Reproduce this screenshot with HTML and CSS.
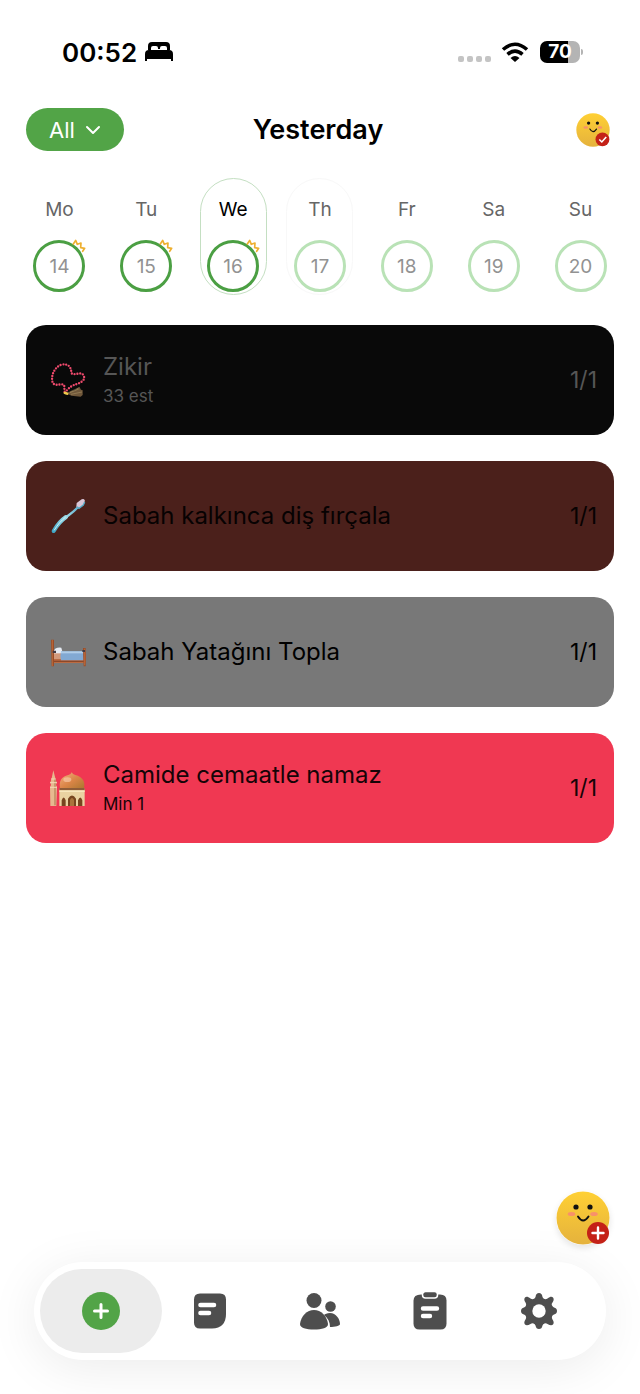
FILE: index.html
```html
<!DOCTYPE html>
<html lang="en">
<head>
<meta charset="UTF-8" />
<meta name="viewport" content="width=device-width, initial-scale=1" />
<title>Habits</title>
<link rel="stylesheet" href="styles.css">
</head>
<body>
  <!-- shared shapes -->
  <svg class="defs" width="0" height="0" aria-hidden="true">
    <defs>
      <linearGradient id="face" x1="0" y1="0" x2="0" y2="1">
        <stop offset="0" stop-color="#ffd034" />
        <stop offset="1" stop-color="#e5b23d" />
      </linearGradient>
      <linearGradient id="dome" x1="0" y1="0" x2="1" y2="1">
        <stop offset="0" stop-color="#f4b183" />
        <stop offset="0.5" stop-color="#dc8648" />
        <stop offset="1" stop-color="#a9752f" />
      </linearGradient>
      <linearGradient id="brush" gradientUnits="userSpaceOnUse" x1="185" y1="70" x2="97" y2="158">
        <stop offset="0" stop-color="#4a9fc4" />
        <stop offset="0.5" stop-color="#9fdcea" />
        <stop offset="1" stop-color="#39a3c4" />
      </linearGradient>
    </defs>
    <symbol id="smiley" viewBox="0 0 54 54">
      <circle cx="27" cy="27" r="26.500" fill="url(#face)" />
      <circle cx="20" cy="16" r="2.600" fill="#111" />
      <circle cx="34" cy="16" r="2.600" fill="#111" />
      <ellipse cx="15.500" cy="23" rx="3.800" ry="2" fill="#f8916a" />
      <ellipse cx="38" cy="23" rx="3.800" ry="2" fill="#f8916a" />
      <path d="M22 25.500q5 8 10.500 0" fill="none" stroke="#111" stroke-width="1.900" stroke-linecap="round" />
      <circle cx="42" cy="42" r="11" fill="#c42117" />
    </symbol>
    <symbol id="crown" viewBox="188 208 42 42">
      <path d="M192 223l7-11 5 12 11-4-1 14 12 2-6 9" fill="none" stroke="#eeb030" stroke-width="5" stroke-linecap="round" stroke-linejoin="round" />
    </symbol>
  </svg>

  <div class="status">
    <span class="time">00:52</span>
    <svg class="sleep" viewBox="0 0 28 20" aria-hidden="true">
      <path d="M3 8V4q0-4 4-4h14q4 0 4 4v4h-3V6q0-2-2-2h-3q-2 0-2 2v1h-2V6q0-2-2-2H8Q6 4 6 6v2z" />
      <path d="M0 19v-7q0-4 4-4h20q4 0 4 4v7h-2v-2H2v2z" />
    </svg>
    <span class="signal"><i></i><i></i><i></i><i></i></span>
    <svg class="wifi" viewBox="0 0 28 20" aria-hidden="true">
      <g fill="none" stroke="#000" stroke-width="3.600">
        <path d="M2 7.500q12-10.500 24 0" />
        <path d="M6.500 12.300q7.500-6.500 15 0" />
      </g>
      <path d="M9.500 16q4.500-3.800 9 0L14 20z" />
    </svg>
    <span class="battery">70</span>
  </div>

  <header class="header">
    <button class="filter">All
      <svg width="16" height="10" viewBox="0 0 16 10" aria-hidden="true"><path d="M2 2l6 6 6-6" fill="none" stroke="#fff" stroke-width="2" stroke-linecap="round" stroke-linejoin="round" /></svg>
    </button>
    <h1>Yesterday</h1>
    <button class="mood" aria-label="Mood saved">
      <svg viewBox="0 0 54 54"><use href="#smiley" /><path d="M37 42l4 4 7-8" fill="none" stroke="#fff" stroke-width="2.500" /></svg>
    </button>
  </header>

  <div class="week">
    <button class="day done"><span class="name">Mo</span><span class="ring">14<svg class="crown"><use href="#crown" /></svg></span></button>
    <button class="day done"><span class="name">Tu</span><span class="ring">15<svg class="crown"><use href="#crown" /></svg></span></button>
    <button class="day done selected"><span class="name">We</span><span class="ring">16<svg class="crown"><use href="#crown" /></svg></span></button>
    <button class="day today"><span class="name">Th</span><span class="ring">17</span></button>
    <button class="day"><span class="name">Fr</span><span class="ring">18</span></button>
    <button class="day"><span class="name">Sa</span><span class="ring">19</span></button>
    <button class="day"><span class="name">Su</span><span class="ring">20</span></button>
  </div>

  <main class="habits">
    <article class="habit black">
      <svg class="emoji" viewBox="90 127 108 108" aria-hidden="true">
        <path d="M138 219l26-7 14-11 5 9 5 2v14l-6 5-28-3z" fill="#6f573a" />
        <path d="M150 219l26-11M153 224l33-7M151 216l24-11" stroke="#b29a6b" stroke-width="1.500" />
        <path d="M134 216C131 208 137 200 129 194C117 193 100 201 97 185C93 164 105 142 124 135C145 130 154 143 154 160C162 170 181 154 190 166C201 184 174 192 162 196C150 201 141 210 137 217" fill="none" stroke="#ee4a6c" stroke-width="7" stroke-linecap="round" stroke-dasharray="0 8.500" />
        <ellipse cx="138" cy="221" rx="8" ry="4" fill="#f0ca4b" transform="rotate(20 138 221)" />
      </svg>
      <div class="info"><h2>Zikir</h2><p>33 est</p></div>
      <span class="count">1/1</span>
    </article>
    <article class="habit brown">
      <svg class="emoji" viewBox="90 54 108 108" aria-hidden="true">
        <path d="M100 155C112 135 125 120 143 108C157 98 166 92 180 74" fill="none" stroke="url(#brush)" stroke-width="7" stroke-linecap="round" />
        <path d="M101 153C112 134 123 121 138 111" fill="none" stroke="url(#brush)" stroke-width="12" stroke-linecap="round" />
        <path d="M103 150C113 134 123 122 136 112" fill="none" stroke="#d3f1f5" stroke-width="3" stroke-linecap="round" />
        <path d="M170 69l15-11q7-3 9 3 1 11-9 19l-9 4-7-4z" fill="#d9c6d8" />
        <path d="M171 80l6 5 13-10 4-9" fill="none" stroke="#55a9c6" stroke-width="4" />
      </svg>
      <div class="info"><h2>Sabah kalkınca diş fırçala</h2></div>
      <span class="count">1/1</span>
    </article>
    <article class="habit gray">
      <svg class="emoji" viewBox="90 44 108 108" aria-hidden="true">
        <path d="M96 100h102v31H96z" fill="#bb6b42" />
        <path d="M101 124h90v4h-90z" fill="#8c4829" />
        <path d="M100 98q4-15 24-13l4 15v6h-28z" fill="#e6ebf3" />
        <path d="M101 102h26v17h-26z" fill="#d2997b" />
        <path d="M123 96h68v27h-68q-3-15 0-27z" fill="#82a9d3" />
        <path d="M123 96h68v6h-68z" fill="#b0cde9" />
        <path d="M93 61h9v80h-7zM189 86h8v55h-6z" fill="#9b4c27" />
        <path d="M97 62v78M194 88v50" stroke="#c97845" stroke-width="2" />
        <path d="M98 94h10v7H98zM187 92h8v6h-8z" fill="#433a42" />
      </svg>
      <div class="info"><h2>Sabah Yatağını Topla</h2></div>
      <span class="count">1/1</span>
    </article>
    <article class="habit red">
      <svg class="emoji" viewBox="90 90 108 108" aria-hidden="true">
        <path d="M100 91l6 24 4 13-2 7 3 6-2 57H91l-1-57 3-6-2-7 4-13z" fill="#e7b98f" />
        <path d="M105 116v80" stroke="#b9875b" stroke-width="4" />
        <path d="M90 128h21M90 142h21M93 117h14" stroke="#f6d8b6" stroke-width="3" />
        <path d="M121 147C115 124 125 109 145 105Q153 103 155 97Q158 103 166 105C188 110 198 127 191 147z" fill="url(#dome)" />
        <ellipse cx="142" cy="119" rx="12" ry="7" fill="#fbd1b2" opacity="0.600" />
        <path d="M118 145h76v53h-76z" fill="#ead2a1" />
        <path d="M118 144h76v7h-76z" fill="#8f5d38" />
        <path d="M118 151h76v5h-76z" fill="#f8e7bd" />
        <path d="M125 198v-17q6-17 12 0v17zM144 198v-22q12-19 24 0v22zM174 198v-17q7-17 13 0v17z" fill="#77451f" />
        <path d="M150 198v-19q6-10 12 0v19z" fill="#aa743c" />
      </svg>
      <div class="info"><h2>Camide cemaatle namaz</h2><p>Min 1</p></div>
      <span class="count">1/1</span>
    </article>
  </main>

  <button class="fab" aria-label="Add mood">
    <svg viewBox="0 0 54 54"><use href="#smiley" /><path d="M42 36.500v11M36.500 42h11" stroke="#fff" stroke-width="2.400" stroke-linecap="round" /></svg>
  </button>

  <nav class="tabs">
    <a class="tab active" href="#today" aria-label="Today">
      <svg viewBox="0 0 40 40"><circle cx="20" cy="20" r="19" fill="#52a447" /><path d="M20 13.500v13M13.500 20h13" stroke="#fff" stroke-width="3" stroke-linecap="round" /></svg>
    </a>
    <a class="tab" href="#notes" aria-label="Notes">
      <svg viewBox="0 0 40 40"><path d="M10 2.500h20q6 0 6 6V23q0 14-14 14.500H10q-6 0-6-6v-23q0-6 6-6z" /><path d="M10.500 14H24M10.500 22H19" stroke="#fff" stroke-width="4.600" stroke-linecap="round" /></svg>
    </a>
    <a class="tab" href="#friends" aria-label="Friends">
      <svg viewBox="0 0 40 40"><circle cx="14" cy="9.500" r="7.500" /><path d="M14 19c7 0 13 6 14 14 0 4-6 5.500-14 5.500S0 37 0 33c1-8 7-14 14-14z" /><circle cx="30.500" cy="15.500" r="5.300" /><path d="M24 24c1-1 3-2 6-2 6 0 10 6 10 11 0 2-5 3-10 3 0-5-2-9-6-12z" /></svg>
    </a>
    <a class="tab" href="#plans" aria-label="Plans">
      <svg viewBox="0 0 40 40"><path d="M11 3.500h19q6.500 0 6.500 6v23q0 6-6 6h-21q-6 0-6-6v-23q0-6 7.500-6z" /><rect x="12.500" y="0.500" width="15" height="6.500" rx="3" stroke="#fff" stroke-width="1.500" /><path d="M13 17.500h14M13 25h7" stroke="#fff" stroke-width="4.400" stroke-linecap="round" /></svg>
    </a>
    <a class="tab" href="#settings" aria-label="Settings">
      <svg viewBox="0 0 40 40">
        <path d="M20 2c2 0 3 1 3.500 4q0.500 1.500 2 2t3-0.500c2.500-2 4.500-2 5.500-1s1 3-0.500 5q-1.500 1.500-0.500 3t2 2C37 17 38 18 38 20s-1 3-3 3.500q-1.500 0.500-2 2t0.500 3c1.500 2 1.500 4 0.500 5s-3 1-5.500-0.500q-1.500-1-3-0.500t-2 2C23 37 22 38 20 38s-3-1-3.500-3.500q-0.500-1.500-2-2t-3 0.500c-2.500 1.500-4.500 1.500-5.500 0.500s-1-3 0.500-5q1-1.500 0.500-3t-2-2C3 23 2 22 2 20s1-3 3-3.500q1.500-0.500 2-2t-0.500-3C5 9.500 5 7.500 6 6.500s3-1 5.500 1q1.500 1 3 0.500t2-2C17 3 18 2 20 2z" />
        <circle cx="20" cy="20" r="6.700" fill="#fff" />
      </svg>
    </a>
  </nav>
</body>
</html>
```
FILE: styles.css
```css
* {
  box-sizing: border-box;
}
body {
  font-family: Inter, "Liberation Sans", sans-serif;
  background: #fff;
  color: #000;
  display: flex;
  flex-direction: column;
  min-height: 100vh;
  margin: 0;
}
button {
  font: inherit;
  color: inherit;
  background: none;
  border: none;
  padding: 0;
  cursor: pointer;
}
h1, h2, p {
  margin: 0;
}
svg {
  display: block;
}
.defs {
  position: absolute;
}

/* Status bar */
.status {
  display: flex;
  align-items: center;
  height: 104px;
  padding: 0 60px 0 62px;
}
.time {
  font-size: 26px;
  font-weight: 600;
}
.sleep {
  width: 28px;
  height: 20px;
  margin-left: 8px;
}
.signal {
  display: flex;
  gap: 3px;
  margin: 13px 10px 0 auto;
}
.signal i {
  width: 6px;
  height: 6px;
  border-radius: 2px;
  background: #c4c4c4;
}
.wifi {
  width: 28px;
  height: 20px;
  margin-right: 11px;
}
.battery {
  position: relative;
  width: 40px;
  height: 22px;
  border-radius: 7px;
  background: linear-gradient(90deg, #000 70%, #b4b4b4 70%);
  color: #fff;
  font-size: 19px;
  font-weight: 700;
  line-height: 22px;
  text-align: center;
}
.battery::after {
  content: "";
  position: absolute;
  left: 41px;
  top: 8px;
  width: 2px;
  height: 6px;
  border-radius: 0 2px 2px 0;
  background: #b4b4b4;
}

/* Header */
.header {
  display: grid;
  grid-template-columns: 1fr auto 1fr;
  align-items: center;
  height: 51px;
  padding: 0 30px 0 26px;
}
.filter {
  display: flex;
  align-items: center;
  justify-content: center;
  gap: 10px;
  width: 98px;
  height: 43px;
  border-radius: 22px;
  background: #52a447;
  color: #fff;
  font-size: 22px;
}
h1 {
  font-size: 27px;
  font-weight: 600;
}
.mood {
  justify-self: end;
  width: 34px;
  height: 34px;
}

/* Week strip */
.week {
  display: grid;
  grid-template-columns: repeat(7, 1fr);
  justify-items: center;
  padding: 23px 16px 0;
}
.day {
  display: flex;
  flex-direction: column;
  align-items: center;
  width: 67px;
  height: 117px;
  padding-top: 18px;
  border: 1px solid transparent;
  border-radius: 34px;
}
.day.selected {
  border-color: #c4dfc2;
}
.day.today {
  border-color: #f8f8f8;
}
.name {
  color: #666;
  font-size: 19px;
  line-height: 26px;
}
.selected .name {
  color: #000;
}
.ring {
  position: relative;
  width: 52px;
  height: 52px;
  margin-top: 17px;
  border: 3px solid #b9e2b6;
  border-radius: 50%;
  color: #929292;
  font-size: 19px;
  line-height: 48px;
}
.done .ring {
  border-color: #4b9f43;
}
.crown {
  position: absolute;
  top: -4px;
  right: -4px;
  width: 14px;
  height: 14px;
}

/* Habit cards */
.habits {
  display: flex;
  flex-direction: column;
  gap: 26px;
  padding: 30px 26px;
}
.habit {
  display: flex;
  align-items: center;
  gap: 17px;
  height: 110px;
  padding: 0 17px 0 24px;
  border-radius: 20px;
}
.emoji {
  width: 36px;
  height: 36px;
}
.info {
  flex: 1;
}
h2 {
  font-size: 24px;
  font-weight: 400;
  line-height: 32px;
}
.info p {
  font-size: 17px;
  line-height: 26px;
}
.count {
  font-size: 23px;
}
.black {
  background: #090909;
  color: #565656;
}
.brown {
  background: #4b201b;
  color: #070202;
}
.gray {
  background: #787878;
}
.red {
  background: #f03852;
  color: #160407;
}

/* Floating mood button */
.fab {
  align-self: flex-end;
  z-index: 1;
  width: 54px;
  height: 54px;
  margin: auto 30px 17px 0;
  border-radius: 50%;
  box-shadow: 0 3px 6px rgba(0, 0, 0, 0.1);
}

/* Bottom tabs */
.tabs {
  display: flex;
  height: 98px;
  margin: 0 34px 34px;
  padding: 7px 12px;
  border-radius: 49px;
  background: #fff;
  box-shadow: 0 8px 50px rgba(0, 0, 0, 0.08);
}
.tab {
  flex: 1;
  display: flex;
  align-items: center;
  justify-content: center;
  margin: 0 -6px;
  border-radius: 42px;
}
.tab.active {
  background: #ececec;
}
.tab svg {
  width: 40px;
  height: 40px;
  fill: #4e4e4e;
}
```
